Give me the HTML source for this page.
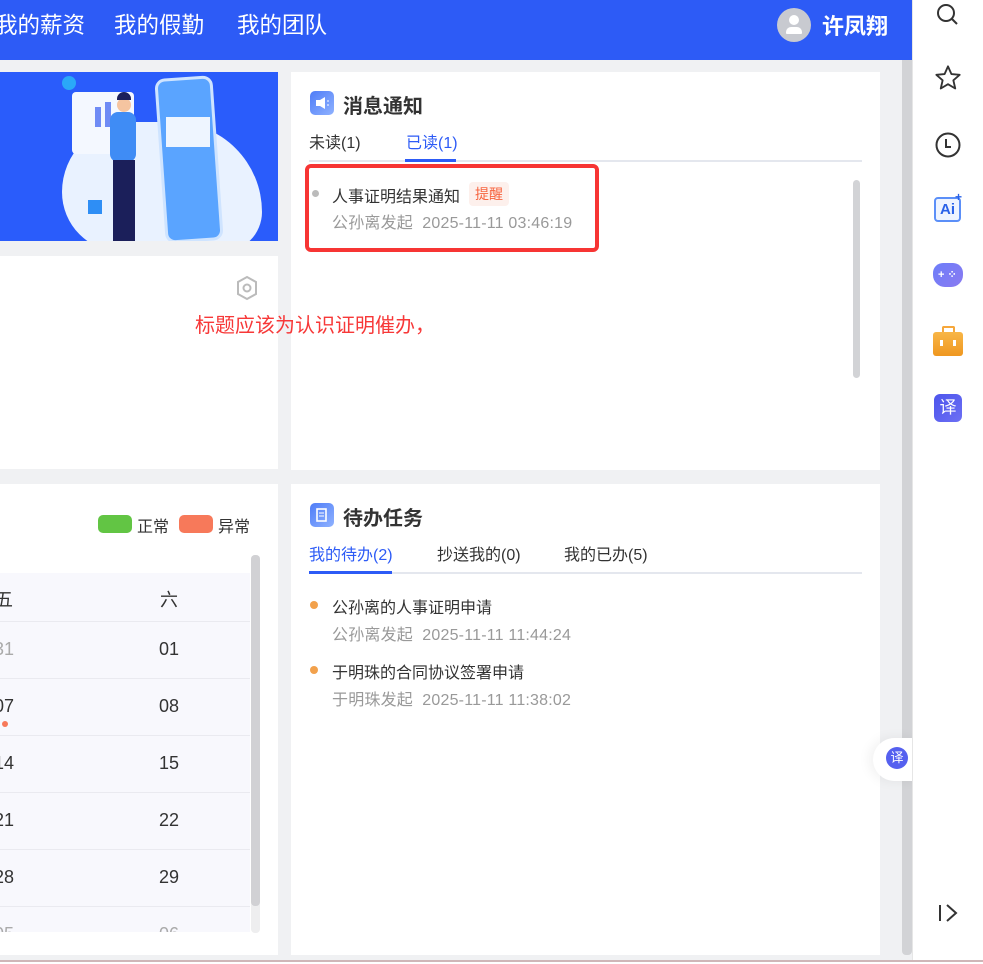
<!DOCTYPE html>
<html><head><meta charset="utf-8"><style>
*{margin:0;padding:0;box-sizing:border-box}
body{width:983px;height:964px;overflow:hidden;background:#f0f1f3;font-family:"Liberation Sans","Noto Sans CJK SC",sans-serif;position:relative;color:#333}
.abs{position:absolute}
.hdr{left:0;top:0;width:912px;height:60px;background:#2d5bf6}
.nav{color:#fff;font-size:22.5px;top:8px}
.card{background:#fff}
.side{left:912px;top:0;width:71px;height:964px;background:#fff;border-left:1px solid #e6e6e6}
.tab{font-size:16px;color:#333}
.gray{color:#999;font-size:16px;letter-spacing:0.2px}
.t15{font-size:16px;color:#333}
.row{left:0;width:250px;height:57px;background:#f8f8fd;border-top:1px solid #eaeaf0}
.num{font-size:18px;color:#333}
</style></head><body>
<div class="abs hdr"></div>
<div class="abs nav" style="left:-5px">我的薪资</div>
<div class="abs nav" style="left:114px">我的假勤</div>
<div class="abs nav" style="left:237px">我的团队</div>
<div class="abs" style="left:777px;top:8px;width:34px;height:34px;border-radius:50%;background:#c8cad0"></div>
<div class="abs" style="left:789px;top:15px;width:10px;height:10px;border-radius:50%;background:#fff"></div>
<div class="abs" style="left:786px;top:27px;width:16px;height:7px;border-radius:5px 5px 1px 1px;background:#fff"></div>
<div class="abs" style="left:822px;top:9px;color:#fff;font-size:22px;font-weight:bold">许凤翔</div>

<div class="abs" style="left:902px;top:60px;width:10px;height:895px;background:#d2d3d6;border-radius:0 0 4px 4px"></div>

<!-- banner -->
<div class="abs" style="left:0;top:72px;width:278px;height:169px;background:#2a5cfb;overflow:hidden">
<div class="abs" style="left:62px;top:50px;width:200px;height:130px;border-radius:70px 90px 40px 60px;background:#e9f2ff"></div>
<div class="abs" style="left:72px;top:20px;width:62px;height:62px;background:#f4f8ff;border-radius:4px"></div>
<div class="abs" style="left:95px;top:35px;width:6px;height:20px;background:#6f8bf5"></div>
<div class="abs" style="left:105px;top:30px;width:6px;height:25px;background:#6f8bf5"></div>
<div class="abs" style="left:160px;top:5px;width:58px;height:165px;border-radius:10px;background:#5aa4ff;border:3px solid #cfe4ff;transform:rotate(-4deg)"></div>
<div class="abs" style="left:166px;top:45px;width:44px;height:30px;background:#eef5ff"></div>
<div class="abs" style="left:110px;top:40px;width:26px;height:50px;border-radius:8px;background:#3f8cf5"></div>
<div class="abs" style="left:113px;top:88px;width:22px;height:82px;background:#1b1f5a"></div>
<div class="abs" style="left:117px;top:26px;width:14px;height:14px;border-radius:50%;background:#f5c4a0"></div>
<div class="abs" style="left:117px;top:20px;width:14px;height:8px;border-radius:7px 7px 0 0;background:#1b1f5a"></div>
<div class="abs" style="left:62px;top:4px;width:14px;height:14px;border-radius:50%;background:#2aa8f8"></div>
<div class="abs" style="left:88px;top:128px;width:14px;height:14px;background:#2e8ef5"></div>
</div>

<div class="abs card" style="left:0;top:256px;width:278px;height:213px"></div>
<svg class="abs" style="left:235px;top:275px" width="24" height="26" viewBox="0 0 24 26"><polygon points="12,2 21,7 21,19 12,24 3,19 3,7" fill="none" stroke="#bbb" stroke-width="2"/><circle cx="12" cy="13" r="3.5" fill="none" stroke="#bbb" stroke-width="2"/></svg>

<!-- calendar card -->
<div class="abs card" style="left:0;top:484px;width:278px;height:471px;overflow:hidden">
<div class="abs" style="left:98px;top:31px;width:34px;height:18px;border-radius:5px;background:#62c544"></div>
<div class="abs t15" style="left:137px;top:29px">正常</div>
<div class="abs" style="left:179px;top:31px;width:34px;height:18px;border-radius:5px;background:#f7795a"></div>
<div class="abs t15" style="left:218px;top:29px">异常</div>
<div class="abs" style="left:0;top:89px;width:250px;height:359px;overflow:hidden">
<div class="abs" style="left:0;top:0;width:250px;height:49px;background:#f8f8fd"></div>
<div class="abs num" style="left:-5px;top:13px">五</div><div class="abs num" style="left:160px;top:13px">六</div>
<div class="abs row" style="top:48px"></div><div class="abs num" style="left:-6px;top:66px;color:#aaa">31</div><div class="abs num" style="left:159px;top:66px">01</div>
<div class="abs row" style="top:105px"></div><div class="abs num" style="left:-6px;top:123px">07</div><div class="abs num" style="left:159px;top:123px">08</div>
<div class="abs" style="left:2px;top:148px;width:6px;height:6px;border-radius:50%;background:#f7795a"></div>
<div class="abs row" style="top:162px"></div><div class="abs num" style="left:-6px;top:180px">14</div><div class="abs num" style="left:159px;top:180px">15</div>
<div class="abs row" style="top:219px"></div><div class="abs num" style="left:-6px;top:237px">21</div><div class="abs num" style="left:159px;top:237px">22</div>
<div class="abs row" style="top:276px"></div><div class="abs num" style="left:-6px;top:294px">28</div><div class="abs num" style="left:159px;top:294px">29</div>
<div class="abs row" style="top:333px"></div><div class="abs num" style="left:-6px;top:351px;color:#aaa">05</div><div class="abs num" style="left:159px;top:351px;color:#aaa">06</div>
</div>
<div class="abs" style="left:251px;top:71px;width:9px;height:378px;background:#eeeeef;border-radius:4px"></div>
<div class="abs" style="left:251px;top:71px;width:9px;height:351px;background:#d1d1d4;border-radius:4px"></div>
</div>

<!-- message card -->
<div class="abs card" style="left:291px;top:72px;width:589px;height:398px"></div>
<div class="abs" style="left:310px;top:91px;width:24px;height:24px;border-radius:5px;background:linear-gradient(135deg,#4e7cf7,#8fb2ff)"></div>
<svg class="abs" style="left:314px;top:96px" width="16" height="14"><polygon points="2,4 6,4 11,1 11,13 6,10 2,10" fill="#fff"/><line x1="13" y1="5" x2="15" y2="5" stroke="#fff"/><line x1="13" y1="9" x2="15" y2="9" stroke="#fff"/></svg>
<div class="abs" style="left:343px;top:90px;font-size:20px;font-weight:bold;color:#333">消息通知</div>
<div class="abs tab" style="left:309px;top:129px">未读(1)</div>
<div class="abs tab" style="left:406px;top:129px;color:#2d5bf6">已读(1)</div>
<div class="abs" style="left:309px;top:160px;width:553px;height:2px;background:#e4e7ee"></div>
<div class="abs" style="left:405px;top:159px;width:51px;height:3px;background:#2d5bf6"></div>
<div class="abs" style="left:853px;top:180px;width:7px;height:198px;background:#d2d3d6;border-radius:4px"></div>
<div class="abs" style="left:312px;top:190px;width:7px;height:7px;border-radius:50%;background:#bbb"></div>
<div class="abs t15" style="left:332px;top:183px">人事证明结果通知</div>
<div class="abs" style="left:469px;top:182px;width:40px;height:24px;border-radius:4px;background:#fdf0ec;color:#f7643f;font-size:14px;text-align:center;line-height:24px">提醒</div>
<div class="abs gray" style="left:332px;top:209px">公孙离发起&nbsp;&nbsp;2025-11-11 03:46:19</div>
<div class="abs" style="left:305px;top:164px;width:294px;height:88px;border:4px solid #f73534;border-radius:6px"></div>

<!-- todo card -->
<div class="abs card" style="left:291px;top:484px;width:589px;height:471px"></div>
<div class="abs" style="left:310px;top:503px;width:24px;height:24px;border-radius:5px;background:linear-gradient(135deg,#4e7cf7,#8fb2ff)"></div>
<svg class="abs" style="left:316px;top:508px" width="12" height="14"><rect x="1" y="1" width="9" height="12" fill="none" stroke="#fff" stroke-width="1.6"/><line x1="3" y1="5" x2="8" y2="5" stroke="#fff"/><line x1="3" y1="8" x2="8" y2="8" stroke="#fff"/></svg>
<div class="abs" style="left:343px;top:502px;font-size:20px;font-weight:bold;color:#333">待办任务</div>
<div class="abs tab" style="left:309px;top:541px;color:#2d5bf6">我的待办(2)</div>
<div class="abs tab" style="left:437px;top:541px">抄送我的(0)</div>
<div class="abs tab" style="left:564px;top:541px">我的已办(5)</div>
<div class="abs" style="left:309px;top:572px;width:553px;height:2px;background:#e4e7ee"></div>
<div class="abs" style="left:309px;top:571px;width:83px;height:3px;background:#2d5bf6"></div>
<div class="abs" style="left:310px;top:601px;width:8px;height:8px;border-radius:50%;background:#f2a14c"></div>
<div class="abs t15" style="left:332px;top:594px">公孙离的人事证明申请</div>
<div class="abs gray" style="left:332px;top:621px">公孙离发起&nbsp;&nbsp;2025-11-11 11:44:24</div>
<div class="abs" style="left:310px;top:666px;width:8px;height:8px;border-radius:50%;background:#f2a14c"></div>
<div class="abs t15" style="left:332px;top:659px">于明珠的合同协议签署申请</div>
<div class="abs gray" style="left:332px;top:686px">于明珠发起&nbsp;&nbsp;2025-11-11 11:38:02</div>

<div class="abs" style="left:195px;top:309px;font-size:20px;color:#f73838">标题应该为认识证明催办，</div>

<div class="abs" style="left:873px;top:738px;width:45px;height:43px;border-radius:22px 0 0 22px;background:#fff;box-shadow:-4px 0 12px rgba(0,0,0,.06)"></div>
<div class="abs" style="left:886px;top:747px;width:22px;height:22px;border-radius:50%;background:#5560ef;color:#fff;font-size:13px;text-align:center;line-height:22px">译</div>

<div class="abs side"></div>
<svg class="abs" style="left:936px;top:3px" width="24" height="24"><circle cx="10" cy="10" r="8" fill="none" stroke="#333" stroke-width="2"/><line x1="16" y1="16" x2="21" y2="21" stroke="#333" stroke-width="2"/></svg>
<svg class="abs" style="left:934px;top:64px" width="28" height="28" viewBox="0 0 24 24"><polygon points="12,2 14.9,8.6 22,9.3 16.6,14 18.2,21 12,17.3 5.8,21 7.4,14 2,9.3 9.1,8.6" fill="none" stroke="#333" stroke-width="1.6" stroke-linejoin="round"/></svg>
<svg class="abs" style="left:934px;top:131px" width="28" height="28"><circle cx="14" cy="14" r="11.5" fill="none" stroke="#333" stroke-width="2"/><polyline points="12,8 12,16 17,16" fill="none" stroke="#333" stroke-width="2"/></svg>
<div class="abs" style="left:934px;top:197px;width:27px;height:25px;border:2px solid #5b8ff8;border-radius:4px;background:#eef4ff;color:#2a62e8;font-weight:bold;font-size:15px;text-align:center;line-height:21px">Ai</div>
<div class="abs" style="left:955px;top:190px;color:#2a62e8;font-size:12px;font-weight:bold">+</div>
<div class="abs" style="left:933px;top:263px;width:30px;height:24px;border-radius:10px 10px 12px 12px;background:linear-gradient(135deg,#6d7ef9,#8a7af1)"></div>
<div class="abs" style="left:938px;top:268px;color:#fff;font-size:11px;font-weight:bold">+ ⁘</div>
<div class="abs" style="left:942px;top:326px;width:13px;height:8px;border:2px solid #f6a73b;border-bottom:none;border-radius:2px 2px 0 0"></div>
<div class="abs" style="left:933px;top:332px;width:30px;height:24px;border-radius:3px;background:linear-gradient(#f8b647,#ef9720)"></div>
<div class="abs" style="left:940px;top:340px;width:3px;height:6px;background:#fff"></div>
<div class="abs" style="left:953px;top:340px;width:3px;height:6px;background:#fff"></div>
<div class="abs" style="left:934px;top:394px;width:28px;height:28px;border-radius:6px;background:linear-gradient(135deg,#4d55ec,#6c6ff4);color:#fff;font-size:17px;text-align:center;line-height:28px">译</div>
<svg class="abs" style="left:937px;top:902px" width="24" height="22"><line x1="3" y1="3" x2="3" y2="19" stroke="#333" stroke-width="2"/><polyline points="10,3 19,11 10,19" fill="none" stroke="#333" stroke-width="2"/></svg>

<div class="abs" style="left:0;top:960px;width:983px;height:4px;background:#fff;border-top:2px solid #cfb6b8"></div>
</body></html>
